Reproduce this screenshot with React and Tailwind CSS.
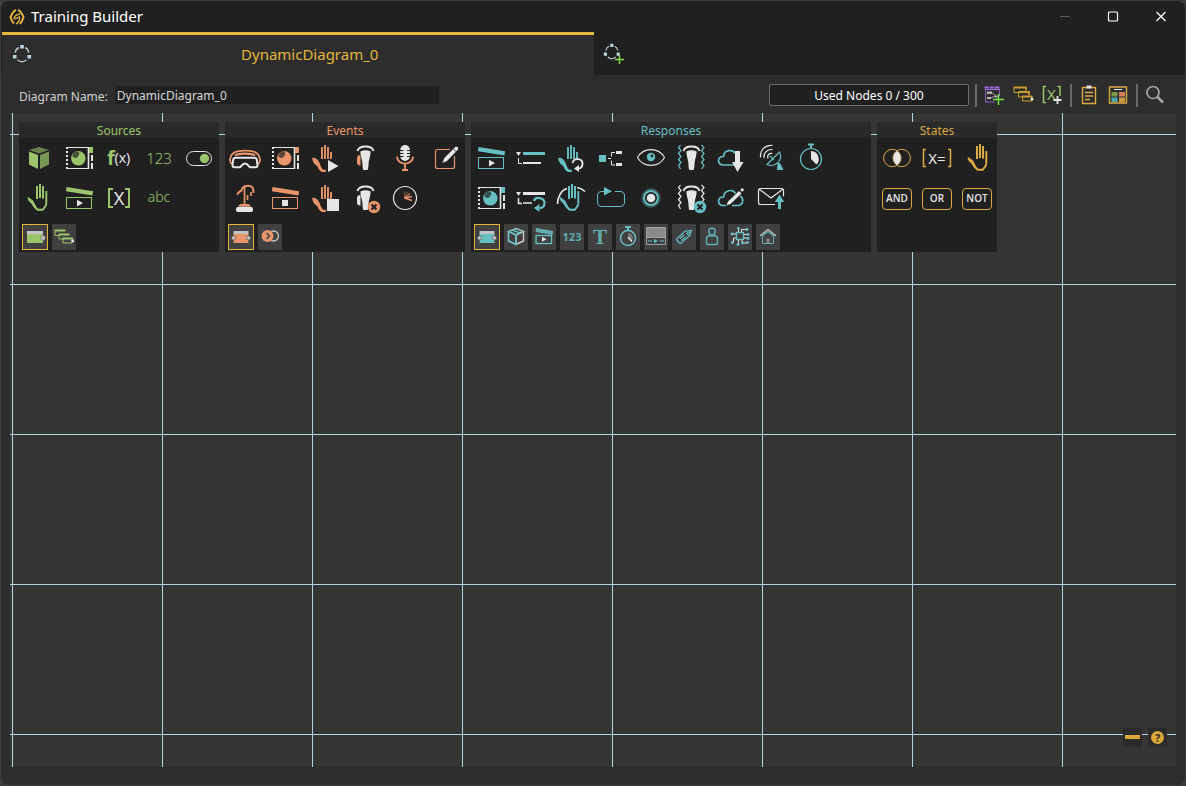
import React from "react";

const W = "#e6e6e6";
const D = "#202020";
const GREEN = "#9cc46c";

/* ---------- 40x40 palette glyphs; the accent colour is currentColor ---------- */

const Cube = () => (
  <g>
    <path d="M20 9l10 3-10 3.5L10 12z" fill="#6b814c" />
    <path d="M10 13.5l9 3.5v14l-9-4.5z" fill="currentColor" />
    <path d="M30 13.5L21 17v14l9-4.5z" fill="#7a9655" />
  </g>
);

const Film = () => (
  <g>
    <path d="M7 9.5h23M7 30.5h23" stroke={W} />
    <path d="M8 9v22" stroke={W} strokeWidth="2" strokeDasharray="2 2" />
    <path d="M29.5 9v22" stroke={W} strokeWidth="1.6" />
    <path d="M30 9h4v6h-4z" fill="currentColor" />
    <path d="M32 17h2v6h-2zM32 25h2v6h-2z" fill={W} />
    <circle cx="19.3" cy="20.3" r="7.2" fill="currentColor" />
    <path d="M13.4 18.5a6 6 0 0 1 5.6-5.2 3.5 3.5 0 0 1-5.6 5.2z" fill={D} opacity=".7" />
  </g>
);

const Clapper = ({ stop }) => (
  <g>
    <path d="M7.5 9L34 13.2l-.5 4.3L7 13.3z" fill="currentColor" />
    <rect x="7.5" y="19.5" width="25" height="11" fill="none" stroke="currentColor" />
    {stop ? (
      <path d="M17 22h6v6h-6z" fill={W} />
    ) : (
      <path d="M18 21.8l6 3.2-6 3.4z" fill={W} />
    )}
  </g>
);

const Hand = () => (
  <g fill="none" stroke="currentColor">
    <path d="M18 8v13M21 6v14M24 8v12.500" strokeWidth="2" />
    <path d="M27.300 13v12.500c0 3-2.600 4.500-3.500 6.200h-5.300c-2.300-1.700-3.900-3.600-4.700-6.700" strokeWidth="1.900" />
    <path d="M9 19.500l4.500 3 4 7.500 1.200 1.200-2.700-1-3.500-5.200c-1.800-1-3.500-3.200-3.500-5.500z" fill="currentColor" />
  </g>
);

const HalfHand = ({ children }) => (
  <g>
    <path d="M17 9v12M20 7v14M23 9v12M26 14v7" stroke="currentColor" strokeWidth="1.900" />
    <path
      d="M7.200 20c3.200-.8 6.600 2.200 7.800 6 .8 2.600 1.800 4.700 3.300 5.700h2.500V34h-4c-2.300-1.300-3.600-3.500-4.500-6-2.200-1-5-4.500-5.100-8z"
      fill="currentColor"
    />
    {children}
  </g>
);

const Cone = () => (
  <g>
    <path d="M12.500 13c1.500-6 14.500-6 16 0" fill="none" stroke={W} strokeWidth="1.900" />
    <path d="M15.300 13.500q5.200-2.600 10.400 0c-.2 5-2 8-2.200 12.500 0 2-.3 4.500-.8 6h-4.400c-.6-1.500-.8-4-.8-6-.2-4.500-2-7.500-2.200-12.500z" fill={W} />
  </g>
);

const Cancel = () => (
  <g>
    <circle cx="29" cy="29" r="6.200" fill="currentColor" />
    <path d="M26.500 26.500l5 5m0-5l-5 5" stroke={D} strokeWidth="2" />
  </g>
);

const Grip = ({ fill }) => (
  <path d="M15.500 17v10.500c-2 .3-3.500-1-3.500-3v-4.500c0-2 1.200-3 3.500-3z" fill={fill} />
);

const Waves = ({ stroke }) => (
  <path
    d="M9.500 7l-2 2.500 2.500 3-2.500 3 2.500 3-2.500 3 2.500 3-2.500 3 2 3.500M30.500 7l2.500 2.500-2.500 3 2.500 3-2.500 3 2.500 3-2.500 3 2.500 3-2.500 3.500"
    fill="none"
    stroke={stroke}
    strokeWidth="1.200"
  />
);

const glyphs = {
  cube: <Cube />,
  film: <Film />,
  fx: (
    <g fontFamily="Noto Sans, sans-serif">
      <text x="8" y="27" fontSize="20" fontWeight="700" fill="currentColor">f</text>
      <text x="15.500" y="25" fontSize="14" fill={W}>(x)</text>
    </g>
  ),
  num: <text x="20" y="26" fontSize="15" textAnchor="middle" fontFamily="Noto Sans, sans-serif" fontWeight="300" fill="currentColor">123</text>,
  abc: <text x="20" y="24" fontSize="14" textAnchor="middle" fontFamily="Noto Sans, sans-serif" fontWeight="300" fill="currentColor">abc</text>,
  toggle: (
    <g>
      <rect x="7.500" y="13.500" width="25" height="14" rx="7" fill="none" stroke={W} />
      <circle cx="25.500" cy="20.500" r="4.700" fill="currentColor" />
    </g>
  ),
  hand: <Hand />,
  handState: <g transform="translate(2 0)"><Hand /></g>,
  play: <Clapper />,
  stop: <Clapper stop />,
  bracketX: (
    <g>
      <path d="M14 11h-4v18h4M26 11h4v18h-4" fill="none" stroke="currentColor" strokeWidth="2" />
      <text x="20" y="26.500" fontSize="18" textAnchor="middle" fontFamily="Noto Sans, sans-serif" fill={W}>X</text>
    </g>
  ),
  vr: (
    <g fill="none">
      <path d="M7 26c-3-2-2.500-8 1-10.500 4-3.800 20-3.800 24 0 3.500 2.500 4 8.500 1 10.500" stroke="currentColor" strokeWidth="1.800" />
      <path d="M10 17.500c3-2.500 17-2.500 20 0" stroke="currentColor" strokeWidth="2.200" />
      <path d="M10.500 19.700h19q2 0 2.300 2l.7 5.600q0 2-2 2h-5.500l-3.300-3.200q-1.700-1.200-3.400 0L15 29.300H9.500q-2 0-2-2l.7-5.600q.3-2 2.300-2z" stroke={W} strokeWidth="2" />
    </g>
  ),
  handPlay: <HalfHand><path d="M23 22l10.500 6L23 34z" fill={W} /></HalfHand>,
  handStop: <HalfHand><path d="M22 21h12v12H22z" fill={W} /></HalfHand>,
  grab: <g><Cone /><Grip fill="currentColor" /></g>,
  grabX: <g><Cone /><Grip fill={W} /><Cancel /></g>,
  mic: (
    <g>
      <rect x="15.300" y="7" width="9.600" height="16" rx="4.800" fill={W} />
      <path d="M15 12.500h3.500M22 12.500h3M15 15.500h3.500M22 15.500h3M15 18.500h3.500M22 18.500h3" stroke={D} />
      <path d="M12 18.500c0 9.500 16 9.500 16 0M20 26v5.500M17 32h6" fill="none" stroke="currentColor" strokeWidth="1.900" />
    </g>
  ),
  edit: (
    <g>
      <path d="M25 11.500H12.500q-2 0-2 2v15q0 2 2 2h15q2 0 2-2V18" fill="none" stroke="currentColor" strokeWidth="1.200" />
      <path d="M17.500 25l1.800-5 11-11q1-1 2.300.2t.2 2.600L22 23z" fill={W} />
      <path d="M28 10.500l4 4" stroke={D} strokeWidth=".8" />
    </g>
  ),
  joint: (
    <g>
      <path d="M12 16.500c1-1 2-3 4.500-4 .5-3 2-4.500 5.500-4.800 4.500-.2 6.500 1 6.500 7.300" fill="none" stroke="currentColor" strokeWidth="2" />
      <path d="M19.500 9v18M22.500 17v5M26 14v4" stroke="currentColor" strokeWidth="1.700" />
      <path d="M13.500 28.500q0-2.500 3-2.500h6q3 0 3 2.500z" fill="currentColor" />
      <rect x="11" y="28.800" width="17" height="5.200" rx="2.600" fill={W} />
    </g>
  ),
  gauge: (
    <g fill="none">
      <circle cx="20" cy="20" r="11.500" stroke={W} strokeWidth="1.200" />
      <path d="M19.500 20l7.500-1.500M19.500 20l7.500 2.500" stroke="currentColor" strokeWidth="1.700" />
      <path d="M19.500 20l5.500-4.500" stroke="currentColor" strokeWidth="1.400" opacity=".8" />
      <path d="M19.500 20l3-6M19.500 20l.3-6.500" stroke="currentColor" opacity=".5" />
    </g>
  ),
  listPlay: (
    <g>
      <path d="M5 14h5l-2.500 4z" fill={W} />
      <path d="M12 14h22v3H12z" fill="currentColor" />
      <path d="M7.500 20v5.500H11" fill="none" stroke={W} />
      <path d="M12 24h18v2H12z" fill={W} />
    </g>
  ),
  listLoop: (
    <g>
      <path d="M5 14h5l-2.500 4z" fill={W} />
      <path d="M12 14h22v3H12z" fill={W} />
      <path d="M7.500 20v5.500H11M12 25h9" fill="none" stroke={W} strokeWidth="1.500" />
      <path d="M23 23c1-4.500 10.500-4 10.500 2 0 3-2 5-5 5.200" fill="none" stroke="currentColor" strokeWidth="2.200" />
      <path d="M28.500 26v8l-5.500-4z" fill="currentColor" />
    </g>
  ),
  handLoop: (
    <HalfHand>
      <path d="M21.500 25c1-5.500 10-5 10 .5 0 3-2 5-4.500 5.200" fill="none" stroke={W} strokeWidth="1.900" />
      <path d="M28 27v7l-5-3.500z" fill={W} />
    </HalfHand>
  ),
  handArc: (
    <g>
      <Hand />
      <path d="M6.500 26c0-7 4-14 9.500-15.500M26 9.500c3.500.5 6 2 8 4" fill="none" stroke={W} strokeWidth="1.700" />
    </g>
  ),
  branch: (
    <g>
      <path d="M8 17h7v7H8z" fill="currentColor" />
      <path d="M17 20.500h3M24 14.500h-3.500v4M20.500 22.500v4.500H24" fill="none" stroke={W} />
      <path d="M25 13h6v3h-6zM25 25h6v3h-6z" fill={W} />
    </g>
  ),
  loop: (
    <g>
      <path d="M24 13.500h5q4.500 0 4.500 4.500v6q0 4.500-4.500 4.500H11q-4.500 0-4.500-4.500v-6q0-4.500 4.500-4.500h3" fill="none" stroke="currentColor" />
      <path d="M13 9l8 4.300-8 4.200z" fill="currentColor" />
    </g>
  ),
  eye: (
    <g>
      <path d="M6.500 19.500c6-10.500 21-10.500 27 0-6 10.500-21 10.500-27 0z" fill="none" stroke={W} strokeWidth="1.100" />
      <circle cx="20" cy="19" r="4.200" fill="currentColor" />
      <circle cx="21" cy="18" r="1.400" fill={D} />
    </g>
  ),
  target: (
    <g fill="none">
      <circle cx="20" cy="20" r="9" stroke="currentColor" strokeWidth="1.400" opacity=".4" />
      <circle cx="20" cy="20" r="7" stroke="currentColor" strokeWidth="2" />
      <circle cx="20" cy="20" r="4.300" fill={W} />
    </g>
  ),
  haptic: <g><Waves stroke="currentColor" /><Cone /></g>,
  hapticX: <g><Waves stroke={W} /><Cone /><Cancel /></g>,
  cloudDown: (
    <g>
      <path d="M23 27H12c-6 0-6-8.500.5-8.500C13 11.500 22 11 24 15.500" fill="none" stroke="currentColor" strokeWidth="1.700" />
      <path d="M24 13h5v11h3.500L26.500 34 21 24h3z" fill={W} />
    </g>
  ),
  cloudEdit: (
    <g>
      <path d="M12 27.500c-6 0-6-8.500.5-8.500C13 12 22 10.500 24.500 15.500M29 18c4.500 2.500 3 9.500-2 9.500h-6M12 27.500h3" fill="none" stroke="currentColor" strokeWidth="1.700" />
      <path d="M15.500 27.500l1.500-4 11-10.500 2.500 2.500-11 10.500z" fill={W} />
      <circle cx="31.200" cy="11.800" r="1.600" fill={W} />
    </g>
  ),
  dish: (
    <g fill="none">
      <path d="M9.500 19.500C9 11.500 14 7 21.500 7.500M13 20c-.5-5.500 3-8.800 8.500-8.500M17 20.500c-1-3.500 1-5.500 4.500-5" stroke={W} strokeWidth="1.200" />
      <path d="M16 26.500L28.500 14c2.500 5 .5 9-2.500 11.200-3 2.300-7 2.800-10 1.300zM19 18l4 4" stroke="currentColor" strokeWidth="1.200" />
      <path d="M26.500 25h2.500l3.500 7h-6.500z" fill="currentColor" />
    </g>
  ),
  timer: (
    <g>
      <circle cx="20" cy="21" r="10.500" fill="none" stroke="currentColor" strokeWidth="1.200" />
      <path d="M17 5.500h6v2h-6zM19 7.500h2v3h-2z" fill="currentColor" />
      <path d="M20 13a8 8 0 0 1 5.500 13.500L20 21z" fill={W} />
    </g>
  ),
  mail: (
    <g>
      <path d="M24 26.500H9.500q-2 0-2-2v-12q0-2 2-2h21q2 0 2 2v6M8 11l12 9 12-9" fill="none" stroke={W} strokeWidth="1.200" />
      <path d="M28.500 16.500l4.700 7.500h-3.200v7h-3v-7h-3.200z" fill="currentColor" />
    </g>
  ),
  intersect: (
    <g fill="none">
      <circle cx="15.300" cy="20" r="8.700" stroke="currentColor" />
      <circle cx="24.700" cy="20" r="8.700" stroke="currentColor" />
      <path d="M20 13c5 3.500 5 10.500 0 14-5-3.500-5-10.500 0-14z" fill={W} />
    </g>
  ),
  assign: (
    <g>
      <path d="M9 11.500H6.500v17H9M31 11.500h2.500v17H31" fill="none" stroke="currentColor" strokeWidth="1.500" />
      <text x="20" y="26" fontSize="15" textAnchor="middle" fontFamily="Noto Sans, sans-serif" fill={W}>X=</text>
    </g>
  ),
};

/* ---------- 24x26 category glyphs ---------- */

const small = {
  sourceNode: (
    <g>
      <path d="M4 7h16v3H4z" fill="#c4c4c4" />
      <path d="M4 10h16v9H4z" fill="currentColor" />
      <circle cx="20" cy="14" r="2.400" fill="#c4c4c4" stroke="#555" strokeWidth=".6" />
    </g>
  ),
  bridgeNode: (
    <g>
      <path d="M4.500 7h15v3h-15z" fill="#c4c4c4" />
      <path d="M4.500 10h15v2a2.400 2.400 0 0 0 0 4.500V19h-15v-2.500a2.400 2.400 0 0 0 0-4.500z" fill="currentColor" />
      <circle cx="4.500" cy="14" r="2.100" fill="#c4c4c4" stroke="#555" strokeWidth=".6" />
      <circle cx="19.500" cy="14" r="2.100" fill="#c4c4c4" stroke="#555" strokeWidth=".6" />
    </g>
  ),
  stack: (
    <g fill="none" stroke="currentColor">
      <path d="M3 7.500v4h4M7 11v4h4M11 15v4h9v-4" />
      <path d="M2.500 6.500h11M6.500 10.500h11M10.500 14.500h10.500" strokeWidth="2" />
      <circle cx="20.700" cy="17" r="1.400" fill={W} stroke="none" />
    </g>
  ),
  link: (
    <g fill="none">
      <circle cx="15.500" cy="12" r="5" stroke="#c4c4c4" strokeWidth="1.300" />
      <circle cx="9.500" cy="12" r="6" fill="currentColor" />
      <path d="M8.500 9l3 3-3 3" stroke="#444" strokeWidth="1.600" />
    </g>
  ),
  cube: (
    <g fill="none" strokeWidth="1.400">
      <path d="M12 11l7.500-3.500v9.500L12 20.500z" stroke="#d0d0d0" />
      <path d="M12 4.500l7.500 3L12 11 4.500 7.500zM4.500 7.500V17l7.500 3.500" stroke="#9dbdbe" />
      <path d="M4.500 7.500L12 11v9.500L4.500 17zM8.500 6l7.500 3" stroke="currentColor" />
    </g>
  ),
  clapper: (
    <g>
      <path d="M4 4l17 3-.3 4L3.700 8z" fill="currentColor" opacity=".85" />
      <rect x="4" y="11.500" width="15.500" height="8" fill="none" stroke="currentColor" strokeWidth="1.300" />
      <path d="M10 12.700l4.500 2.500-4.500 2.600z" fill={W} />
    </g>
  ),
  num: <text x="12" y="17" fontSize="11" fontWeight="700" textAnchor="middle" fontFamily="Noto Sans, sans-serif" fill="currentColor" opacity=".85">123</text>,
  text: <text x="12" y="19.500" fontSize="21" fontWeight="700" textAnchor="middle" fontFamily="Liberation Serif, serif" fill="currentColor" opacity=".85">T</text>,
  timer: (
    <g fill="none" stroke="currentColor" strokeWidth="1.500">
      <circle cx="12" cy="14" r="7.500" />
      <path d="M9 3h6M12 3v3" strokeWidth="2" />
      <path d="M12 9a5 5 0 0 1 4 8l-4-3z" fill="#777" stroke="none" />
      <path d="M12 13.500l4 4" stroke={W} />
    </g>
  ),
  panel: (
    <g>
      <path d="M3 4h18v9H3z" fill="#8a8a8a" />
      <path d="M2.500 3.500h19v17h-19zM2.500 13.500h19" fill="none" stroke="#a0a0a0" />
      <path d="M4 17h4M16 17h4" stroke="currentColor" />
      <path d="M10 15l4 2-4 2z" fill="currentColor" />
    </g>
  ),
  tag: (
    <g fill="none" stroke="currentColor" strokeWidth="1.300" opacity=".9">
      <path d="M19.500 6.500l-6.500.7-8 7.500q-.8.800 0 1.600l2.500 2.700q.8.800 1.600 0l8.500-7.500z" />
      <circle cx="16.500" cy="9.500" r="1.300" />
      <path d="M8 14.500l4-3.500M9.500 16.500l4-3.500" />
    </g>
  ),
  person: (
    <g fill="none" stroke="currentColor" strokeWidth="1.400" opacity=".9">
      <circle cx="12" cy="7.500" r="3.200" />
      <path d="M9 11.500c-1.800.5-2.500 2-2.500 4v3.500q0 1.500 1.500 1.500h8q1.500 0 1.500-1.500v-3.500c0-2-.7-3.500-2.500-4q-3 1.800-6 0z" />
    </g>
  ),
  chip: (
    <g fill="none" strokeWidth="1">
      <path d="M8 10H4M8 14H5.500v4M16 10.500h4M16 14h4M10.500 8V4.500M13.500 8V5.500h5M10.500 16v4M14 16v3h5" stroke={W} />
      <rect x="8.500" y="8.500" width="7" height="7" stroke="currentColor" strokeWidth="1.400" />
      <g fill="currentColor">
        <circle cx="4" cy="10" r="1.400" /><circle cx="4.500" cy="18.500" r="1.400" />
        <circle cx="20" cy="10.500" r="1.400" /><circle cx="20" cy="14.500" r="1.400" />
        <circle cx="10.500" cy="4.500" r="1.400" /><circle cx="19" cy="5.500" r="1.400" />
        <circle cx="10" cy="20.500" r="1.400" /><circle cx="14.500" cy="19" r="1.400" />
        <circle cx="19.500" cy="18.500" r="1.400" />
      </g>
    </g>
  ),
  home: (
    <g fill="none">
      <path d="M6.500 12v7.500h11V12L12 7.500z" stroke="currentColor" strokeWidth="1.100" opacity=".85" />
      <path d="M10.500 19v-4.500h3V19z" fill="#888" />
      <path d="M4 12l8-6.500 8 6.500" stroke="#c8c8c8" strokeWidth="1.300" />
    </g>
  ),
};

const groups = [
  {
    title: "Sources",
    look: "w-[200px] text-[#9cc46c]",
    rows: [
      [["cube", "Object"], ["film", "Media"], ["fx", "Function"], ["num", "Number"], ["toggle", "Boolean"]],
      [["hand", "Hand"], ["play", "Clip"], ["bracketX", "Variable"], ["abc", "String"]],
    ],
    cats: [["sourceNode", "Source node"], ["stack", "Source stack"]],
  },
  {
    title: "Events",
    look: "w-[240px] text-[#e8956c]",
    rows: [
      [["vr", "Headset"], ["film", "Media event"], ["handPlay", "Hand start"], ["grab", "Controller"], ["mic", "Voice"], ["edit", "Edit"]],
      [["joint", "Joint"], ["stop", "Clip stop"], ["handStop", "Hand stop"], ["grabX", "Controller release"], ["gauge", "Timer event"]],
    ],
    cats: [["bridgeNode", "Event node"], ["link", "Event link"]],
  },
  {
    title: "Responses",
    look: "w-[400px] text-[#67bfc2]",
    rows: [
      [["play", "Play clip"], ["listPlay", "List"], ["handLoop", "Reset hand"], ["branch", "Branch"], ["eye", "Visibility"], ["haptic", "Haptics"], ["cloudDown", "Download"], ["dish", "Broadcast"], ["timer", "Stopwatch"]],
      [["film", "Show media"], ["listLoop", "Repeat list"], ["handArc", "Move hand"], ["loop", "Loop"], ["target", "Highlight"], ["hapticX", "Stop haptics"], ["cloudEdit", "Cloud edit"], ["mail", "Send mail"]],
    ],
    cats: [["bridgeNode", "Response node"], ["cube", "Objects"], ["clapper", "Clips"], ["num", "Numbers"], ["text", "Text"], ["timer", "Timers"], ["panel", "Panels"], ["tag", "Tags"], ["person", "Avatar"], ["chip", "Devices"], ["home", "Home"]],
  },
  {
    title: "States",
    look: "w-[120px] text-[#dba945]",
    rows: [
      [["intersect", "Intersect"], ["assign", "Assign"], ["handState", "Hand state"]],
      [["AND"], ["OR"], ["NOT"]],
    ],
    cats: [],
  },
];

function Tool({ id, label }) {
  if (!label) {
    return (
      <button type="button" className="flex size-10 items-center justify-center pt-px">
        <span className="flex h-[22px] w-[30px] items-center justify-center rounded-[4px] border border-current">
          <span className="font-['Open_Sans',sans-serif] text-[10px] font-semibold text-[#e6e6e6]">{id}</span>
        </span>
      </button>
    );
  }
  return (
    <button type="button" aria-label={label} className="size-10">
      <svg viewBox="0 0 40 40" className="block size-10">{glyphs[id]}</svg>
    </button>
  );
}

function Group({ title, look, rows, cats }) {
  return (
    <section className={`min-h-[130px] shrink-0 bg-[#202020] ${look}`}>
      <h2 className="h-4 bg-[#292929] text-center text-[12px] leading-[18px]">{title}</h2>
      {rows.map((row, i) => (
        <div key={i} className="flex">
          {row.map(([id, label]) => <Tool key={id} id={id} label={label} />)}
        </div>
      ))}
      <div className="flex gap-1 px-[3px] pt-1.5">
        {cats.map(([id, label], i) => (
          <button
            key={id}
            type="button"
            aria-label={label}
            className={i === 0 ? "h-[26px] border border-[#e3b63c] bg-[#404040]" : "h-[26px] bg-[#404040]"}
          >
            <svg viewBox="0 0 24 26" className={i === 0 ? "-my-px block h-[26px] w-6" : "block h-[26px] w-6"}>{small[id]}</svg>
          </button>
        ))}
      </div>
    </section>
  );
}

function Divider() {
  return <span className="mr-0.5 ml-1 h-[23px] w-0.5 bg-[#6a6a6a]" />;
}

function BarButton({ label, children }) {
  return (
    <button type="button" aria-label={label} className="flex h-6 w-[29px] items-center justify-center">
      <svg viewBox="0 0 22 22" className="size-[22px]" fill="none">{children}</svg>
    </button>
  );
}

function Ring() {
  return (
    <g>
      <path d="M3.500 9.500C4 6.500 5 5 7.500 4M14.500 4c2.500 1 3.500 2.500 4 5.500M6 17.500c3 2.500 7 2.500 10 0" fill="none" stroke="#c8d4d6" strokeWidth="1.300" />
      <path d="M9 1h4v4H9zM1 12h4v4H1zM17 12h4v4h-4z" fill="#b5d8de" />
    </g>
  );
}

export default function App() {
  return (
    <div className="flex min-h-screen flex-col bg-[#3c3c3c] p-px font-['Noto_Sans',sans-serif]">
      <div className="flex flex-1 flex-col overflow-hidden rounded-lg bg-[#2d2d2d]">
        <header className="flex h-[31px] items-center bg-[#202020] pl-2">
          <svg viewBox="0 0 16 18" className="mr-1.5 h-[18px] w-4" fill="none" stroke="#e3b63c" strokeWidth="2">
            <path d="M7 2C5 2.500 4 4 3 6L1.500 9 3 13l2 2.500M9 2c2 .5 3 2 4 4l1.500 3L13 13l-2 3" />
            <path d="M11 6C7 6.500 5 8.500 5 11.500M6 11l4.500-2c.5 3-1 5.500-3.500 7" strokeWidth="1.300" />
          </svg>
          <h1 className="flex-1 pb-0.5 text-[15px] leading-5 text-white">Training Builder</h1>
          <button type="button" aria-label="Minimize" className="flex h-full w-12 items-center justify-center">
            <svg viewBox="0 0 12 12" className="size-3"><path d="M1 5.500h10" stroke="#5c5c5c" /></svg>
          </button>
          <button type="button" aria-label="Maximize" className="flex h-full w-12 items-center justify-center">
            <svg viewBox="0 0 12 12" className="size-3"><rect x="1.500" y="1" width="9" height="9" rx="1" fill="none" stroke="#fff" strokeWidth="1.200" /></svg>
          </button>
          <button type="button" aria-label="Close" className="flex h-full w-12 items-center justify-center">
            <svg viewBox="0 0 12 12" className="size-3"><path d="M1.500 1l9 9M10.500 1l-9 9" stroke="#fff" strokeWidth="1.200" /></svg>
          </button>
        </header>

        <nav className="flex h-[43px] bg-[#202020] pl-px">
          <button type="button" className="flex w-1/2 items-center border-t-[3px] border-[#e3b63c] bg-[#2d2d2d] pr-1.5 pb-0.5 pl-2.5">
            <svg viewBox="0 0 22 22" className="size-5"><Ring /></svg>
            <span className="flex-1 text-center text-[15px] text-[#e3b63c]">DynamicDiagram_0</span>
          </button>
          <button type="button" aria-label="Add diagram" className="flex w-10 items-center justify-center">
            <svg viewBox="0 0 22 22" className="size-[22px]">
              <g transform="scale(.8)"><Ring /></g>
              <path d="M16.500 12v9M12 16.500h9" stroke="#85dc50" strokeWidth="1.500" />
            </svg>
          </button>
        </nav>

        <div className="flex h-[38px] items-center pt-0.5 pr-4 pl-[18px]">
          <label htmlFor="diagram-name" className="mr-[7px] pt-[3px] text-[12px] text-[#d0d0d0]">Diagram Name:</label>
          <input
            id="diagram-name"
            defaultValue="DynamicDiagram_0"
            className="h-[18px] w-[324px] bg-[#202020] px-0.5 pt-0.5 text-[12px] text-[#d8d8d8] outline-none"
          />
          <div className="mr-0.5 ml-auto flex h-[22px] w-[200px] items-center justify-center rounded-[2px] border border-[#6e6e6e] bg-[#202020] pt-0.5 text-[12px] text-white">
            Used Nodes 0 / 300
          </div>
          <Divider />
          <BarButton label="Add node group">
            <path d="M2.500 5v13h9M16.500 5v7" stroke="#8a5cc0" />
            <path d="M1.500 2.500h4v2h-4zM6.500 2.500h4v2h-4zM11.500 2.500h5v2h-5zM2 5h15v1H2z" fill="#a66be6" />
            <path d="M4 7.500h5v2.500H4zM4 13h4v2H4zM11.500 11.500h3v2h-3z" fill="#b5b5b5" />
            <path d="M9 8.700l3.500 3M8 13.700l4-1.500" stroke="#9c9c9c" />
            <path d="M15.500 10v11M10 15.500h11" stroke="#6fe03c" strokeWidth="1.500" />
          </BarButton>
          <BarButton label="Node stack">
            <path d="M2 4v4.500h4M6.500 8.500V13h4.500M10.500 12.500v4.500h9.500v-4.500" stroke="#c99a2e" />
            <path d="M1.500 3.500h12.500v3M6 8h11v3M10 12.500h10.500" stroke="#c99a2e" strokeWidth="1.800" />
            <circle cx="20" cy="15" r="1.500" fill={W} />
          </BarButton>
          <BarButton label="Add variable">
            <path d="M5 2.500H2.500v16H5M16.500 2.500H19V12" stroke={GREEN} strokeWidth="1.500" />
            <text x="10.500" y="16" fontSize="15" textAnchor="middle" fontFamily="Noto Sans, sans-serif" fill={GREEN}>X</text>
            <path d="M16.500 12v8M12.500 16h8" stroke={W} strokeWidth="1.800" />
          </BarButton>
          <Divider />
          <BarButton label="Clipboard">
            <path d="M4.500 3.500h13v16h-13z" stroke="#dba945" strokeWidth="1.400" />
            <path d="M8.500 1.500h5v3h-5z" fill={W} />
            <path d="M7 8.500h8M7 12h8M7 15.500h5" stroke="#dba945" strokeWidth="1.600" />
          </BarButton>
          <BarButton label="Overview">
            <path d="M2.500 3h17v16h-17z" stroke="#dba945" strokeWidth="1.400" />
            <path d="M7 5.500h8" stroke={W} />
            <path d="M4.500 8h6v4.500h-6z" fill="#7f9a45" />
            <path d="M12 8h6v4.500h-6z" fill="#d98058" />
            <path d="M4.500 13.500h6V18h-6z" fill="#4fa9ad" />
            <path d="M12 13.500h6V18h-6z" fill="#c99a3c" />
          </BarButton>
          <Divider />
          <BarButton label="Search">
            <circle cx="9" cy="8.500" r="6" stroke="#a8a8a8" strokeWidth="1.700" />
            <path d="M13.500 13l5.500 5.500" stroke="#a8a8a8" strokeWidth="2.500" />
          </BarButton>
        </div>

        <main className="relative mx-[9px] mb-[18px] flex-1 bg-[#353535] bg-[linear-gradient(to_right,#b5d8de_1px,transparent_1px),linear-gradient(to_bottom,#b5d8de_1px,transparent_1px)] bg-[length:150px_150px] bg-[position:2px_21px]">
          <div className="flex flex-wrap gap-1.5 px-[9px] pt-[9px]">
            {groups.map((g) => <Group key={g.title} {...g} />)}
          </div>
          <div className="absolute right-[9px] bottom-5 flex gap-1.5">
            <button type="button" aria-label="Zoom out" className="size-[19px] bg-[#2b2b2b]">
              <svg viewBox="0 0 19 19" className="block size-[19px]"><path d="M2 7h15v4H2z" fill="#dba93a" /></svg>
            </button>
            <button type="button" aria-label="Help" className="flex size-[19px] items-center justify-center bg-[#2b2b2b]">
              <span className="flex size-[13px] items-center justify-center rounded-full bg-[#dba93a] text-[11px] leading-none font-bold text-[#2b2b2b]">?</span>
            </button>
          </div>
        </main>
      </div>
    </div>
  );
}
